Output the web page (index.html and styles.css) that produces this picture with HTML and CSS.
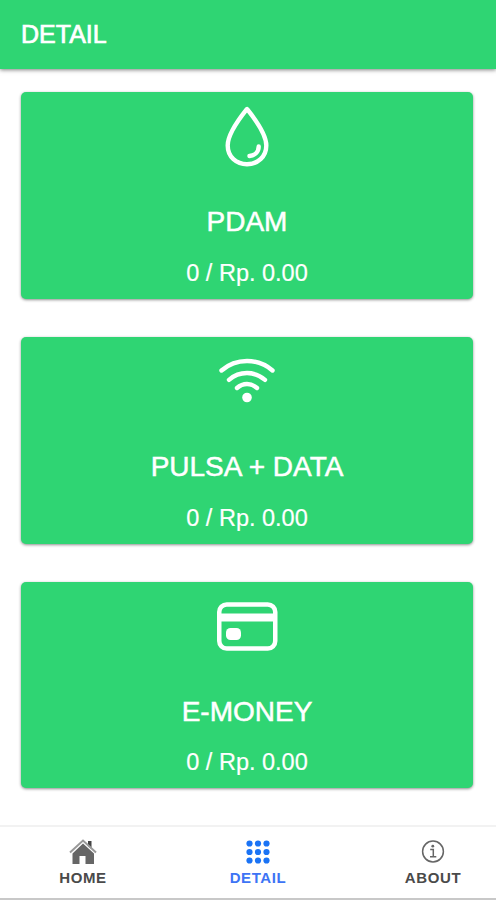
FILE: index.html
```html
<!DOCTYPE html>
<html lang="en">
<head>
    <meta charset="UTF-8">
    <meta name="viewport" content="width=device-width, initial-scale=1.0">
    <title>Detail</title>
    <link rel="stylesheet" href="styles.css">
</head>
<body>

    <header class="toolbar">
        <h1>DETAIL</h1>
    </header>

    <main class="content">
        <div class="card">
            <svg class="card-icon" viewBox="0 0 64 64" fill="none" stroke="#fff" stroke-width="4.400" stroke-linecap="round" stroke-linejoin="round">
                <path d="M32 4C26 11.500 12.700 28 12.700 40.500C12.700 52 21.500 59.200 32 59.200S51.300 52 51.300 40.500C51.300 28 38 11.500 32 4Z"/>
                <path d="M43.700 41.500C43.700 47 39.500 50.500 34.500 51"/>
            </svg>
            <h2>PDAM</h2>
            <p>0 / Rp. 0.00</p>
        </div>

        <div class="card">
            <svg class="card-icon" viewBox="0 0 64 64" fill="none" stroke="#fff" stroke-width="4.400" stroke-linecap="round">
                <path d="M6.500 20.500C21 7.800 43 7.800 57.500 20.500"/>
                <path d="M14 29.800C24.500 20.800 39.500 20.800 50 29.800"/>
                <path d="M22 38C28 32.700 36 32.700 42 38"/>
                <circle cx="32" cy="47.500" r="4.800" fill="#fff" stroke="none"/>
            </svg>
            <h2>PULSA + DATA</h2>
            <p>0 / Rp. 0.00</p>
        </div>

        <div class="card">
            <svg class="card-icon" viewBox="0 0 64 64" fill="none" stroke="#fff" stroke-width="4.500">
                <rect x="4.250" y="9.500" width="56" height="44" rx="7.500"/>
                <path d="M4 22.500H60" stroke-width="8"/>
                <rect x="11" y="33" width="15" height="12" rx="4.500" fill="#fff" stroke="none"/>
            </svg>
            <h2>E-MONEY</h2>
            <p>0 / Rp. 0.00</p>
        </div>
    </main>

    <nav class="tabs">
        <a class="tab">
            <svg viewBox="0 0 28 28" fill="#666">
                <path d="M19 2h3.500v8L19 7z" fill="#444"/>
                <path d="M14 4.500L3.500 14.500v10.500H10.500V17h6v8H25V14.500z"/>
                <path d="M1 13.500L14 1.500l13 12" fill="none" stroke="#999" stroke-width="2"/>
            </svg>
            <span>HOME</span>
        </a>
        <a class="tab tab-selected">
            <svg viewBox="0 0 28 28" fill="#1a73f5">
                <circle cx="5.500" cy="4.500" r="3.100"/>
                <circle cx="14" cy="4.500" r="3.100"/>
                <circle cx="22.500" cy="4.500" r="3.100"/>
                <circle cx="5.500" cy="13" r="3.100"/>
                <circle cx="14" cy="13" r="3.100"/>
                <circle cx="22.500" cy="13" r="3.100"/>
                <circle cx="5.500" cy="21.500" r="3.100"/>
                <circle cx="14" cy="21.500" r="3.100"/>
                <circle cx="22.500" cy="21.500" r="3.100"/>
            </svg>
            <span>DETAIL</span>
        </a>
        <a class="tab">
            <svg viewBox="0 0 28 28" fill="none" stroke="#666" stroke-width="1.500">
                <circle cx="14" cy="12.500" r="10.400"/>
                <path d="M11.200 10.500H14.300V17.500M11 17.700H17.300"/>
                <circle cx="13.800" cy="7.200" r="1.400" fill="#666" stroke="none"/>
            </svg>
            <span>ABOUT</span>
        </a>
    </nav>

</body>
</html>
```

FILE: styles.css
```css
* {
    box-sizing: border-box;
}

body {
    display: flex;
    flex-direction: column;
    height: 900px;
    margin: 0;
    background: #fff;
    font-family: "Liberation Sans", Arial, sans-serif;
    overflow: hidden;
}

.toolbar {
    display: flex;
    align-items: center;
    height: 69px;
    padding: 0 21px 2px;
    background: #2fd573;
    box-shadow: 0 1px 4px rgba(0, 0, 0, 0.5);
}

.toolbar h1 {
    margin: 0;
    color: #fff;
    font-size: 25px;
    font-weight: 400;
    line-height: 28px;
    -webkit-text-stroke: 0.7px #fff;
}

.content {
    flex: 1;
    display: flex;
    flex-direction: column;
    gap: 38px;
    padding: 23.4px 23px 0 21px;
}

.card {
    display: flex;
    flex-direction: column;
    align-items: center;
    height: 206.6px;
    padding-top: 13px;
    border-radius: 5px;
    background: #2fd573;
    color: #fff;
    box-shadow: 0 1px 3px rgba(0, 0, 0, 0.45);
}

.card-icon {
    width: 64px;
    height: 64px;
}

.card h2 {
    margin: 37px 0 0;
    font-size: 28px;
    font-weight: 400;
    line-height: 32px;
    -webkit-text-stroke: 0.5px #fff;
}

.card p {
    margin: 20.6px 0 0;
    font-size: 23.5px;
    line-height: 28px;
    -webkit-text-stroke: 0.2px #fff;
}

.tabs {
    display: flex;
    justify-content: space-between;
    height: 75px;
    padding: 12px 20px 0 40px;
    border-top: 2px solid #f2f2f2;
    border-bottom: 2px solid #c8c8c8;
    background: #fff;
}

.tab {
    display: flex;
    flex-direction: column;
    align-items: center;
    width: 86px;
    color: #4a4a4a;
    font-size: 15px;
    font-weight: 700;
    letter-spacing: 0.6px;
    line-height: 18px;
}

.tab svg {
    width: 28px;
    height: 28px;
    margin-bottom: 2px;
}

.tab-selected {
    color: #3d74f5;
}
```
